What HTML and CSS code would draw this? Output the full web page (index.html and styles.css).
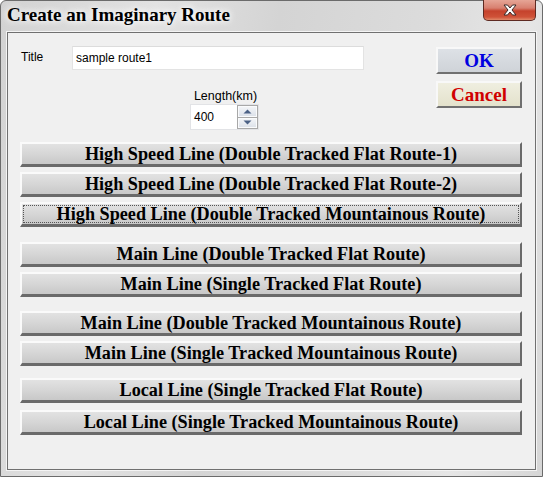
FILE: index.html
```html
<!DOCTYPE html>
<html>
<head>
<meta charset="utf-8">
<link rel="stylesheet" href="styles.css">
</head>
<body>
<div class="window">
  <div class="titlebar">
    <div class="title">Create an Imaginary Route</div>
    <div class="close">
      <svg width="18" height="12" viewBox="0 0 18 12">
        <path d="M3 1 L6.5 1 L9 4 L11.5 1 L15 1 L11 6 L15 11 L11.5 11 L9 8 L6.5 11 L3 11 L7 6 Z" fill="#fff" stroke="#3a2a28" stroke-width="1" stroke-linejoin="round"/>
      </svg>
    </div>
  </div>
  <div class="client">
    <div class="top">
      <div class="left">
        <div class="title-row">
          <span class="lbl">Title</span>
          <div class="textbox">sample route1</div>
        </div>
        <div class="length">
          <div class="len-lbl">Length(km)</div>
          <div class="spin">
            <span class="spin-val">400</span>
            <div class="spin-btns">
              <div class="sb"><svg width="9" height="5" viewBox="0 0 9 5"><path d="M0.5 4.5 L4.5 0.5 L8.5 4.5 Z" fill="#4b6185"/></svg></div>
              <div class="sb"><svg width="9" height="5" viewBox="0 0 9 5"><path d="M0.5 0.5 L4.5 4.5 L8.5 0.5 Z" fill="#4b6185"/></svg></div>
            </div>
          </div>
        </div>
      </div>
      <div class="right">
        <div class="dbtn ok">OK</div>
        <div class="dbtn cancel">Cancel</div>
      </div>
    </div>
    <div class="routes">
      <div class="group">
        <div class="rbtn">High Speed Line (Double Tracked Flat Route-1)</div>
        <div class="rbtn">High Speed Line (Double Tracked Flat Route-2)</div>
        <div class="rbtn focus"><span class="focus-rect">High Speed Line (Double Tracked Mountainous Route)</span></div>
      </div>
      <div class="group g2">
        <div class="rbtn">Main Line (Double Tracked Flat Route)</div>
        <div class="rbtn">Main Line (Single Tracked Flat Route)</div>
      </div>
      <div class="group g3">
        <div class="rbtn">Main Line (Double Tracked Mountainous Route)</div>
        <div class="rbtn">Main Line (Single Tracked Mountainous Route)</div>
      </div>
      <div class="group g4">
        <div class="rbtn">Local Line (Single Tracked Flat Route)</div>
        <div class="rbtn">Local Line (Single Tracked Mountainous Route)</div>
      </div>
    </div>
  </div>
</div>
</body>
</html>
```
FILE: styles.css
```css
html, body {
  margin: 0;
  padding: 0;
  background: #ffffff;
}
.window {
  width: 543px;
  height: 477px;
  box-sizing: border-box;
  background: linear-gradient(100deg, #d2d2d2 0%, #e2e2e2 25%, #d4d4d4 45%, #dcdcdc 70%, #e6e6e6 85%, #d6d6d6 100%);
  border: 1px solid #6b6b6b;
  border-radius: 6px 6px 0 0;
  display: flex;
  flex-direction: column;
}
.titlebar {
  height: 31px;
  display: flex;
  justify-content: space-between;
  align-items: flex-start;
  padding-left: 6px;
  padding-right: 6px;
}
.title {
  font-family: "Liberation Serif", serif;
  font-weight: bold;
  font-size: 19px;
  color: #000;
  margin-top: 3px;
  text-shadow: 0 0 6px #fff, 0 0 10px #fff;
}
.close {
  width: 53px;
  height: 21px;
  margin-top: -1px;
  box-sizing: border-box;
  border: 1px solid #5e2a22;
  border-top: none;
  border-radius: 0 0 5px 5px;
  background: linear-gradient(#e6a596 0%, #d88070 40%, #c5422c 55%, #cf5238 85%, #e08a6a 100%);
  display: flex;
  align-items: center;
  justify-content: center;
}
.client {
  margin: 0 6px 6px 6px;
  flex: 1;
  background: #f0f0f0;
  border: 1px solid #707070;
  box-shadow: 0 0 0 1px #f4f4f4;
  padding: 0 13px 0 12px;
  display: flex;
  flex-direction: column;
}
.top {
  display: flex;
  padding-top: 13px;
  height: 96px;
}
.left {
  flex: 1;
}
.title-row {
  display: flex;
  align-items: flex-start;
}
.lbl {
  width: 52px;
  padding-left: 1px;
  box-sizing: border-box;
  font-family: "Liberation Sans", sans-serif;
  font-size: 12px;
  color: #000;
  margin-top: 4px;
}
.textbox {
  width: 292px;
  height: 24px;
  box-sizing: border-box;
  background: #fff;
  border: 1px solid #e3e3e3;
  border-top-color: #dcdcdc;
  font-family: "Liberation Sans", sans-serif;
  font-size: 12px;
  line-height: 22px;
  padding-left: 3px;
  color: #000;
}
.length {
  margin-left: 170px;
  margin-top: 19px;
  width: 69px;
  display: flex;
  flex-direction: column;
  align-items: center;
}
.len-lbl {
  font-family: "Liberation Sans", sans-serif;
  font-size: 12.5px;
  color: #000;
  line-height: 14px;
  margin-left: 2px;
  white-space: nowrap;
}
.spin {
  margin-top: 1px;
  width: 69px;
  height: 26px;
  box-sizing: border-box;
  background: #fff;
  border: 1px solid #e2e3e6;
  display: flex;
  justify-content: space-between;
  align-items: center;
}
.spin-val {
  font-family: "Liberation Sans", sans-serif;
  font-size: 12px;
  padding-left: 3px;
  color: #000;
}
.spin-btns {
  width: 21px;
  height: 24px;
  box-sizing: border-box;
  border: 1px solid #a8a8a8;
  display: flex;
  flex-direction: column;
  background: #a8a8a8;
  gap: 1px;
}
.sb {
  flex: 1;
  background: linear-gradient(#f2f4f7, #dde2ea);
  border: 1px solid #fafbfc;
  box-sizing: border-box;
  display: flex;
  align-items: center;
  justify-content: center;
}
.right {
  width: 86px;
  display: flex;
  flex-direction: column;
  gap: 7px;
  margin-top: 1px;
}
.dbtn {
  height: 27px;
  box-sizing: border-box;
  border: 2px solid;
  border-color: #f8f8f8 #707070 #707070 #f8f8f8;
  font-family: "Liberation Serif", serif;
  font-weight: bold;
  font-size: 19px;
  display: flex;
  align-items: center;
  justify-content: center;
}
.ok {
  color: #0000e0;
  background: linear-gradient(#dde1e6, #cfd3d8);
}
.cancel {
  color: #d00000;
  background: linear-gradient(#efeee0, #e4e2cc);
}
.routes {
  display: flex;
  flex-direction: column;
}
.group {
  display: flex;
  flex-direction: column;
  gap: 5px;
}
.g2 {
  margin-top: 15px;
}
.g3 {
  margin-top: 14px;
}
.g4 {
  margin-top: 12px;
  gap: 7px;
}
.rbtn {
  height: 25px;
  box-sizing: border-box;
  border-top: 2px solid #fafafa;
  border-left: 2px solid #fafafa;
  border-right: 2px solid #6a6a6a;
  border-bottom: 3px solid #6a6a6a;
  background: linear-gradient(#e2e2e2 0%, #d6d6d6 50%, #c8c8c8 100%);
  font-family: "Liberation Serif", serif;
  font-weight: bold;
  font-size: 18.2px;
  color: #000;
  display: flex;
  align-items: center;
  justify-content: center;
  line-height: 18px;
  white-space: nowrap;
}
.rbtn.focus {
  padding: 1px;
}
.focus-rect {
  flex: 1;
  align-self: stretch;
  border: 1px dotted #555;
  display: flex;
  align-items: center;
  justify-content: center;
}
```
